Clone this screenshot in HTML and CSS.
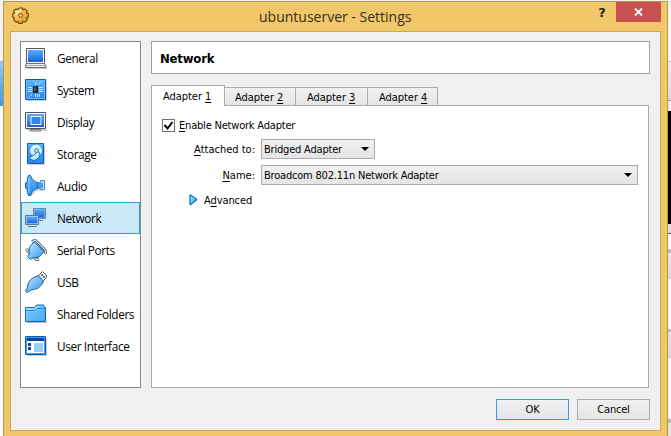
FILE: index.html
```html
<!DOCTYPE html>
<html lang="en">
<head>
<meta charset="utf-8">
<title>ubuntuserver - Settings</title>
<link rel="stylesheet" href="styles.css">
</head>
<body>
<svg width="0" height="0" class="defs" aria-hidden="true">
  <defs>
    <linearGradient id="blue" x1="0" y1="0" x2="0" y2="1"><stop offset="0" stop-color="#55b0fb"/><stop offset="1" stop-color="#1a62da"/></linearGradient>
    <linearGradient id="tile" x1="0" y1="0" x2="0" y2="1"><stop offset="0" stop-color="#5cb6fb"/><stop offset="1" stop-color="#2b83e6"/></linearGradient>
    <linearGradient id="sky" x1="0" y1="0" x2="1" y2="1"><stop offset="0" stop-color="#c6ecff"/><stop offset="1" stop-color="#2f93ee"/></linearGradient>
    <linearGradient id="gold" x1="0" y1="0" x2="1" y2="1"><stop offset="0" stop-color="#ffe48c"/><stop offset="1" stop-color="#dc8f12"/></linearGradient>
  </defs>
</svg>
<div class="desktop">
  <div class="edge edge-left"><i class="l1"></i><i class="l2"></i><i class="l3"></i></div>
  <main class="window">
    <header class="titlebar">
      <svg class="gear" width="18" height="18" viewBox="0 0 18 18">
        <path d="M7.300 1h3.200l.5 1.800 1.800-1 2.400 2.200-1 1.800 2.200.9v3.300l-2 .8.9 2-2.300 2.300-2-.8-.9 2.100H7l-.9-2-2 .8-2.400-2.300.9-2-1.900-.9V6.800l1.900-.8-.9-2 2.300-2.200 2 .9z" fill="url(#gold)" stroke="#6b430e" stroke-width="1.100" stroke-linejoin="round"/>
        <path d="M4 7.500Q5 4 9 4" fill="none" stroke="#fff3c0" stroke-width="1.500"/>
        <circle cx="8.700" cy="8.400" r="1.900" fill="#f0c869" stroke="#7d5418" stroke-width="1"/>
      </svg>
      <h1 class="title">ubuntuserver - Settings</h1>
      <span class="help">?</span>
      <span class="close"><svg width="9" height="8" viewBox="0 0 9 8"><path d="M1 .5 8 7.5M8 .5 1 7.5" stroke="#fff" stroke-width="1.8"/></svg></span>
    </header>
    <div class="client">
      <div class="content">
        <nav class="sidebar">
          <div class="item"><svg class="icon" viewBox="0 -1 22 22"><path d="M2 18h20v3H2z" fill="#c9c9c9"/><path d="M1.500.5h18v15h-18z" fill="#fff" stroke="#555"/><path d="M3 2h15v12H3z" fill="url(#blue)"/><path d="M1.500 15.500h18l1 2v2H.5v-2z" fill="#eee" stroke="#707070"/><path d="M1 17.500h19" stroke="#aaa"/></svg><span>General</span></div>
          <div class="item"><svg class="icon" viewBox="0 0 22 22"><path d="M2 2h20v20H2z" fill="#ccc"/><path d="M.5.5h20v20H.5z" fill="url(#tile)" stroke="#0d59b5"/><path d="M1.500 1.500h18v18h-18z" fill="none" stroke="#6dbafa"/><path d="M8 7h5v7H8z" fill="#28282c"/><path d="M9 8h2v4H9z" fill="#555"/><path d="M10.500 5.500V3M13 5.500l3-3M3 8.500h4M3 10.500h4M3 12.500h4M14 8.500h4M14 10.500h4M14 12.500h4M4 18l3-3M10.500 15v3M12.500 15v3M14.500 15v3" stroke="#c8ecff"/></svg><span>System</span></div>
          <div class="item"><svg class="icon" viewBox="0 0 22 22"><path d="M2 18h20v2H2z" fill="#ccc"/><path d="M.5 1.500h20v16H.5z" fill="#fff" stroke="#555"/><path d="M2 3h17v13H2z" fill="url(#blue)"/><path d="M6 5.500h10v8H6z" fill="#2c86ec" stroke="#fff"/><path d="M5.500 18.500h10v1.500h-10z" fill="#eee" stroke="#777"/></svg><span>Display</span></div>
          <div class="item"><svg class="icon" viewBox="0 0 22 22"><path d="M4 3h16v19H4z" fill="#ccc"/><path d="M2.500.5h16v20h-16z" fill="url(#tile)" stroke="#0762b9"/><circle cx="11" cy="7.500" r="6.500" fill="#d9f1ff" stroke="#238be5"/><path d="M13.500 8.500q3 3.500-.5 7T5 16.500v-3q4 0 6.500-4z" fill="#c5e9ff" stroke="#1662b5"/><circle cx="11.500" cy="7.500" r="2" fill="#a9dcff" stroke="#3d83c4"/></svg><span>Storage</span></div>
          <div class="item"><svg class="icon" viewBox="0 0 22 22"><path d="M5 20l6-6h8v2h-7l-6 5z" fill="#bbb" opacity=".6"/><path d="M11.500 7.500h4v-2h4v9h-4v-1h-4z" fill="#aee0fd" stroke="#4b8cbc"/><path d="M12 8h6v5h-6z" fill="#459ce9"/><path d="M5.500.5Q6 5 12.500 8v5Q6 16 5.500 20.500H3.500Q2 18 2 13H.5V8H2Q2 3 3.500.5z" fill="url(#tile)" stroke="#0767b8"/><path d="M4 3v15" stroke="#9bdcff"/></svg><span>Audio</span></div>
          <div class="item selected"><svg class="icon" viewBox="0 0 22 22"><path d="M8.500 1.500h12v10h-12z" fill="#d7efff" stroke="#4c6e94"/><path d="M9 2h11v9H9z" fill="url(#blue)" stroke="#a9d8fb" stroke-width=".6"/><path d="M12 13.500h6" stroke="#567fa5"/><path d="M.5 8.500h13v9H.5z" fill="#d7efff" stroke="#4c6e94"/><path d="M1.300 9.300h11.400v7.400H1.300z" fill="url(#blue)" stroke="#a9d8fb" stroke-width=".6"/><path d="M3 19.500h9" stroke="#567fa5"/></svg><span>Network</span></div>
          <div class="item"><svg class="icon" viewBox="0 0 22 22"><path d="M7 3l3-2 11 11-1 3M1 10l11 11 2-1" fill="none" stroke="#555" stroke-width="3"/><path d="M7 3l3-2 11 11-1 3M1 10l11 11 2-1" fill="none" stroke="#e9e9e9" stroke-width="1.200"/><path d="M6.500 5.500l4-3 9 9-3 4c-2 3-5 3-8 3l-3 2-3-3 2-3c-1-4 0-7 2-9z" fill="url(#sky)" stroke="#0b65ad"/><path d="M10.500 4l8 8" stroke="#345e80"/></svg><span>Serial Ports</span></div>
          <div class="item"><svg class="icon" viewBox="0 0 22 22"><path d="M13.500 4.500l4-4 4 4v2l-4 4z" fill="#f0f0f0" stroke="#555"/><path d="M16 4h2M18 6h2" stroke="#555" stroke-width="1.500"/><path d="M11 5.500l2-1 5 5v2c-3 5-6 7-11 7l-5 3-1.500-1 2-4c0-5 3-9 8.500-11z" fill="url(#sky)" stroke="#0b65ad"/></svg><span>USB</span></div>
          <div class="item"><svg class="icon" viewBox="0 0 22 22"><path d="M2 19h20v1H2z" fill="#bbb"/><path d="M.5 18.500v-14h9l2-2.500h7l1 2.500h1v14z" fill="url(#sky)" stroke="#086cbb"/><path d="M1 7.500h9l2-2h8" stroke="#188ae0" fill="none"/><path d="M2 8.500h8l2-1h7v10H2z" fill="#55b7f8" opacity=".65"/></svg><span>Shared Folders</span></div>
          <div class="item"><svg class="icon" viewBox="0 0 22 22"><path d="M2 3h20v18H2z" fill="#ccc"/><path d="M.5 1.500h20v18H.5z" fill="#fff" stroke="#075bb3"/><path d="M1.500 2.500h18v16h-18z" fill="none" stroke="#3a9cf2"/><path d="M2 3h17v3H2z" fill="#07489f"/><path d="M9 8h9v9H9z" fill="#9bcaff"/><path d="M3 8h3v3H3zM3 12h3v3H3z" fill="#07489f"/></svg><span>User Interface</span></div>
        </nav>
        <section class="page">
          <h2 class="heading">Network</h2>
          <div class="tabs">
            <div class="tab active">Adapter <u>1</u></div>
            <div class="tab">Adapter <u>2</u></div>
            <div class="tab wide">Adapter <u>3</u></div>
            <div class="tab last">Adapter <u>4</u></div>
          </div>
          <div class="panel">
            <label class="enable"><span class="check"><svg width="11" height="11" viewBox="0 0 11 11"><path d="M1.500 5l3 3.500L9.500 2" fill="none" stroke="#000" stroke-width="2"/></svg></span><span class="text"><u>E</u>nable Network Adapter</span></label>
            <div class="row"><span class="label text"><u>A</u>ttached to:</span><span class="select small"><span class="text">Bridged Adapter</span><i class="arrow"></i></span></div>
            <div class="row"><span class="label text"><u>N</u>ame:</span><span class="select"><span class="text">Broadcom 802.11n Network Adapter</span><i class="arrow"></i></span></div>
            <div class="advanced"><svg width="9" height="12" viewBox="0 0 9 12"><path d="M1.500 1Q1 .8 1 1.500v8.500q0 .8.700.400L7.500 6q.5-.4 0-.8z" fill="url(#sky)" stroke="#0878cb" stroke-width="1.300"/></svg><span class="text">A<u>d</u>vanced</span></div>
          </div>
        </section>
      </div>
      <footer class="buttons"><button class="btn primary">OK</button><button class="btn">Cancel</button></footer>
    </div>
  </main>
  <div class="edge edge-right"><i class="r1"></i><i class="r2"></i><i class="r3"></i><i class="r4"></i><i class="r5"></i><i class="r6"></i><i class="r7"></i><i class="r8"></i></div>
</div>
</body>
</html>
```
FILE: styles.css
```css
* { box-sizing: border-box; }
body { margin: 0; overflow: hidden; background: #f2f2f2; color: #000; font: 11px/14px "DejaVu Sans Condensed", "DejaVu Sans", sans-serif; font-stretch: condensed; }
h1, h2 { margin: 0; }
.defs { position: absolute; }
u { text-decoration: underline; text-decoration-thickness: 1px; text-underline-offset: 2px; }
.desktop { display: flex; width: 671px; height: 436px; }
.edge { width: 3px; display: flex; flex-direction: column; }
.edge i { display: block; flex: none; }
.l1 { height: 62px; background: #f3f3f3; border-bottom: 1px solid #aaa; }
.l2 { height: 44px; background: linear-gradient(#8bcaf6, #3a9ae4); }
.l3 { height: 330px; background: #fafafa; }
.r1 { height: 62px; background: #f5f5f5; border-bottom: 1px solid #bbb; }
.r2 { height: 39px; background: linear-gradient(#eee, #d8d8d8); border-bottom: 1px solid #999; }
.r3 { height: 10px; background: #eee; }
.r4 { height: 113px; background: #000; }
.r5 { height: 10px; background: #ddd; border-bottom: 1px solid #555; }
.r6 { height: 95px; background: linear-gradient(#f7f7f7 15px, #bbb 15px, #bbb 19px, #e9e9e9 19px, #d8d8d8 45px, #f7f7f7 45px); }
.r7 { height: 90px; background: linear-gradient(#bbb 3px, #e5e5e5 3px, #d8d8d8 29px, #f7f7f7 29px); }
.r8 { height: 17px; background: linear-gradient(#bbb 4px, #e5e5e5 4px); }
.window { width: 665px; height: 435px; margin-top: 1px; padding: 0 6px; background: #f0c869; border: 1px solid #b7944f; border-bottom: 0; }
.titlebar { height: 29px; display: flex; align-items: flex-start; }
.gear { margin: 5px 0 0 2px; }
.title { flex: 1; margin: 5px 0 0 229px; font: 400 14px/20px "Open Sans", sans-serif; color: #352e22; white-space: nowrap; }
.help { width: 28px; padding-top: 3px; text-align: center; font: 700 13px/16px "DejaVu Sans", sans-serif; color: #222; }
.close { width: 45px; height: 20px; background: #c75050; display: flex; align-items: center; justify-content: center; }
.client { height: 400px; width: 651px; background: #f0f0f0; border: 1px solid #cfa650; padding: 9px 10px 0 9px; }
.content { display: flex; gap: 10px; height: 347px; }
.sidebar { width: 121px; height: 347px; background: #fff; border: 1px solid #828790; font: 11.8px/16px "Open Sans", sans-serif; letter-spacing: -.38px; }
.item { height: 32px; display: flex; align-items: center; gap: 10px; padding-left: 4px; white-space: nowrap; }
.item span { padding-bottom: 1px; }
.item.selected { background: #cbe8f6; border: 1px solid #26a0da; padding-left: 3px; }
.icon { width: 22px; height: 22px; flex: none; }
.page { width: 499px; letter-spacing: -.2px; }
.heading { height: 33px; border: 1px solid #a0a0a0; background: #fff; padding: 8px; font: 700 13px/17px "DejaVu Sans Condensed", sans-serif; font-stretch: condensed; }
.tabs { display: flex; align-items: flex-end; margin-top: 11px; height: 21px; }
.tab { width: 72px; height: 18px; margin: 0 0 1px -1px; border: 1px solid #acacac; border-bottom: 0; background: linear-gradient(#f0f0f0, #e5e5e5); padding: 3px 0 0 10px; line-height: 14px; letter-spacing: -.05px; white-space: nowrap; }
.tab.wide { width: 73px; padding-left: 11px; }
.tab.last { width: 71px; padding-left: 11px; }
.tab.active { width: 74px; height: 21px; margin: 0; background: #fff; padding: 4px 0 0 11px; position: relative; }
.panel { width: 498px; height: 283px; margin-top: -1px; border: 1px solid #acacac; background: #fff; padding: 12px 10px 0 10px; }
.text { padding-top: 2px; }
.enable { display: flex; align-items: center; gap: 4px; height: 14px; }
.check { width: 13px; height: 13px; border: 1px solid #707070; }
.check svg { display: block; }
.row { display: flex; align-items: center; gap: 6px; height: 20px; margin-bottom: 6px; }
.enable + .row { margin-top: 7px; }
.label { width: 93px; text-align: right; letter-spacing: 0; flex: none; }
.select { width: 377px; height: 20px; flex: none; border: 1px solid #acacac; background: linear-gradient(#f0f0f0, #e5e5e5); display: flex; align-items: center; justify-content: space-between; padding: 0 5px 0 2px; white-space: nowrap; }
.select.small { width: 114px; }
.arrow { border: 4px solid transparent; border-top-color: #000; border-bottom: 0; }
.advanced { display: flex; align-items: center; gap: 6px; margin: 7px 0 0 27px; letter-spacing: -.1px; }
.buttons { display: flex; justify-content: flex-end; gap: 8px; margin-top: 11px; }
.btn { width: 73px; height: 21px; padding: 1px 0 0; border: 1px solid #acacac; background: linear-gradient(#f0f0f0, #e5e5e5); color: #000; font: inherit; letter-spacing: -.2px; }
.btn.primary { border-color: #3399ff; }
```
